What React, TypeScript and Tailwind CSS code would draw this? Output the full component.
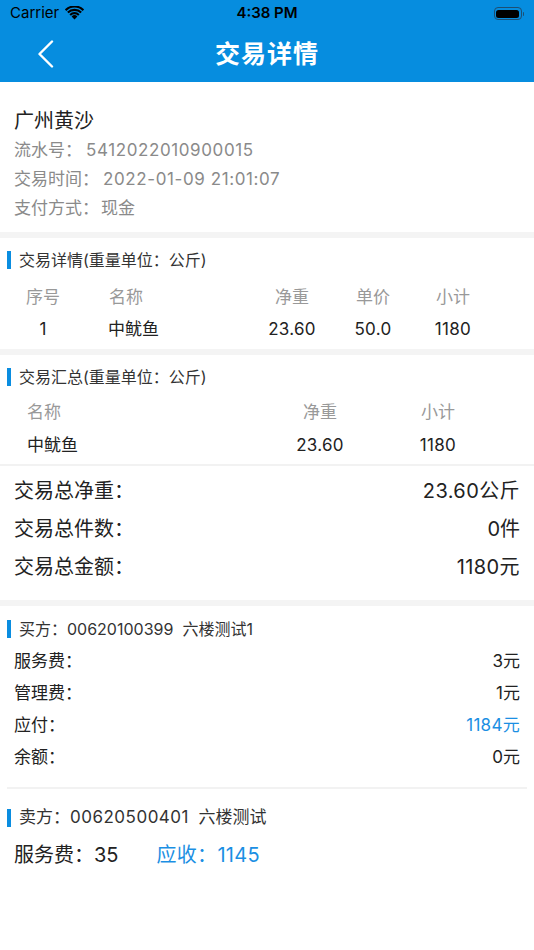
import React from "react";

const Bar = () => <span className="inline-block w-[4px] h-[18px] bg-[#0a8de0] mr-[8px]" />;

function SectionTitle({ children, big }: { children: React.ReactNode; big?: boolean }) {
  return (
    <div className={big ? "flex items-center h-[24px] pl-[7px] text-[17px] text-[#333]" : "flex items-center h-[24px] pl-[7px] text-[16px] text-[#333]"}>
      <Bar />
      <span>{children}</span>
    </div>
  );
}

function Sep() {
  return <div className="h-[6px] bg-[#f4f4f4]" />;
}

export default function App() {
  return (
    <div className="w-[534px] h-[950px] bg-white font-[Inter,'Noto_Sans_CJK_SC',sans-serif] overflow-hidden">
      {/* header */}
      <div className="bg-[#068ddf]">
        <div className="relative h-[27px] flex items-center px-[10px] text-[15px] text-[#111]">
          <span className="text-black">Carrier</span>
          <span className="ml-[6px] mt-[-2px]">
            <svg width="19" height="14" viewBox="0 0 19 14">
              <path d="M9.5 13.5 L6.6 10.4 A4.2 4.2 0 0 1 12.4 10.4 Z" fill="black" />
              <path d="M4.4 8.2 A7.3 7.3 0 0 1 14.6 8.2 L13.1 9.7 A5.2 5.2 0 0 0 5.9 9.7 Z" fill="black" />
              <path d="M2.1 5.8 A10.6 10.6 0 0 1 16.9 5.8 L15.4 7.3 A8.5 8.5 0 0 0 3.6 7.3 Z" fill="black" />
              <path d="M-0.2 3.4 A13.8 13.8 0 0 1 19.2 3.4 L17.7 4.9 A11.7 11.7 0 0 0 1.3 4.9 Z" fill="black" />
            </svg>
          </span>
          <span className="absolute left-0 right-0 text-center font-semibold text-black">4:38 PM</span>
          <span className="ml-auto flex items-center">
            <span className="w-[28px] h-[13px] rounded-[4px] border border-[#1d4f73] p-[1.5px] flex">
              <span className="flex-1 bg-black rounded-[2.5px]" />
            </span>
            <span className="w-[1.5px] h-[4px] bg-[#1d4f73] ml-[1px] rounded-r-sm" />
          </span>
        </div>
        <div className="relative h-[55px] flex items-center justify-center">
          <svg className="absolute left-[36px] top-[13px]" width="20" height="28" viewBox="0 0 20 28">
            <path d="M16 1.5 L3.5 14 L16 26.5" fill="none" stroke="white" strokeWidth="2.4" strokeLinecap="round" strokeLinejoin="round" />
          </svg>
          <span className="text-white text-[25px] font-semibold tracking-[1px]">交易详情</span>
        </div>
      </div>

      {/* section 1 */}
      <div className="pt-[24px] pb-[9px] px-[14px]">
        <div className="h-[30px] flex items-center text-[20px] text-[#222]">广州黄沙</div>
        <div className="h-[29px] flex items-center text-[17px] text-[#8a8a8a]">
          <span>流水号：</span>
          <span className="ml-[4px] tracking-[0.6px]">5412022010900015</span>
        </div>
        <div className="h-[29px] flex items-center text-[17px] text-[#8a8a8a]">
          <span>交易时间：</span>
          <span className="ml-[4px] tracking-[0.6px]">2022-01-09 21:01:07</span>
        </div>
        <div className="h-[29px] flex items-center text-[17px] text-[#8a8a8a]">
          <span>支付方式：</span>
          <span className="ml-[2px]">现金</span>
        </div>
      </div>
      <Sep />

      {/* section 2 */}
      <div className="pt-[10px] pb-[3px]">
        <SectionTitle>交易详情(重量单位：公斤)</SectionTitle>
        <div className="mt-[9px] flex items-center h-[33px] text-[17px] text-[#999]">
          <div className="w-[86px] text-center">序号</div>
          <div className="w-[164px] pl-[23px]">名称</div>
          <div className="w-[84px] text-center">净重</div>
          <div className="w-[78px] text-center">单价</div>
          <div className="w-[82px] text-center">小计</div>
        </div>
        <div className="flex items-center h-[32px] text-[17px] text-[#222]">
          <div className="w-[86px] text-center">1</div>
          <div className="w-[164px] pl-[22px]">中鱿鱼</div>
          <div className="w-[84px] text-center tracking-[0.3px]">23.60</div>
          <div className="w-[78px] text-center tracking-[0.3px]">50.0</div>
          <div className="w-[82px] text-center tracking-[0.3px]">1180</div>
        </div>
      </div>
      <Sep />

      {/* section 3 */}
      <div className="pt-[10px]">
        <SectionTitle>交易汇总(重量单位：公斤)</SectionTitle>
        <div className="mt-[8px] flex items-center h-[32px] text-[17px] text-[#999]">
          <div className="w-[278px] pl-[27px]">名称</div>
          <div className="w-[84px] text-center">净重</div>
          <div className="ml-[34px] w-[84px] text-center">小计</div>
        </div>
        <div className="flex items-center h-[33px] text-[17px] text-[#222]">
          <div className="w-[278px] pl-[27px]">中鱿鱼</div>
          <div className="w-[84px] text-center tracking-[0.3px]">23.60</div>
          <div className="ml-[34px] w-[84px] text-center tracking-[0.3px]">1180</div>
        </div>
        <div className="mt-[2px] h-[1.5px] bg-[#f2f2f2]" />
        <div className="pt-[6px] pb-[14px] px-[14px] text-[20px] text-[#222]">
          <div className="h-[38px] flex items-center justify-between">
            <span>交易总净重：</span>
            <span className="tracking-[0.4px]">23.60公斤</span>
          </div>
          <div className="h-[38px] flex items-center justify-between">
            <span>交易总件数：</span>
            <span>0件</span>
          </div>
          <div className="h-[38px] flex items-center justify-between">
            <span>交易总金额：</span>
            <span className="tracking-[0.4px]">1180元</span>
          </div>
        </div>
      </div>
      <Sep />

      {/* section 4 buyer */}
      <div className="pt-[11px]">
        <SectionTitle>买方：00620100399&nbsp;&nbsp;六楼测试1</SectionTitle>
        <div className="mt-[5px] px-[14px] text-[17px] text-[#222]">
          <div className="h-[32px] flex items-center justify-between">
            <span>服务费：</span>
            <span>3元</span>
          </div>
          <div className="h-[32px] flex items-center justify-between">
            <span>管理费：</span>
            <span>1元</span>
          </div>
          <div className="h-[32px] flex items-center justify-between">
            <span>应付：</span>
            <span className="text-[#1b8fe3] tracking-[0.3px]">1184元</span>
          </div>
          <div className="h-[32px] flex items-center justify-between">
            <span>余额：</span>
            <span>0元</span>
          </div>
        </div>
        <div className="mt-[13px] mx-[7px] h-[2px] bg-[#f2f2f2]" />
      </div>

      {/* section 5 seller */}
      <div className="pt-[17px]">
        <SectionTitle big>
          卖方：<span className="tracking-[0.5px]">00620500401</span>&nbsp;&nbsp;六楼测试
        </SectionTitle>
        <div className="mt-[9px] px-[14px] h-[32px] flex items-center text-[20px]">
          <span className="text-[#222]">服务费：35</span>
          <span className="ml-[38px] text-[#1b8fe3] tracking-[0.3px]">应收：1145</span>
        </div>
      </div>
    </div>
  );
}
